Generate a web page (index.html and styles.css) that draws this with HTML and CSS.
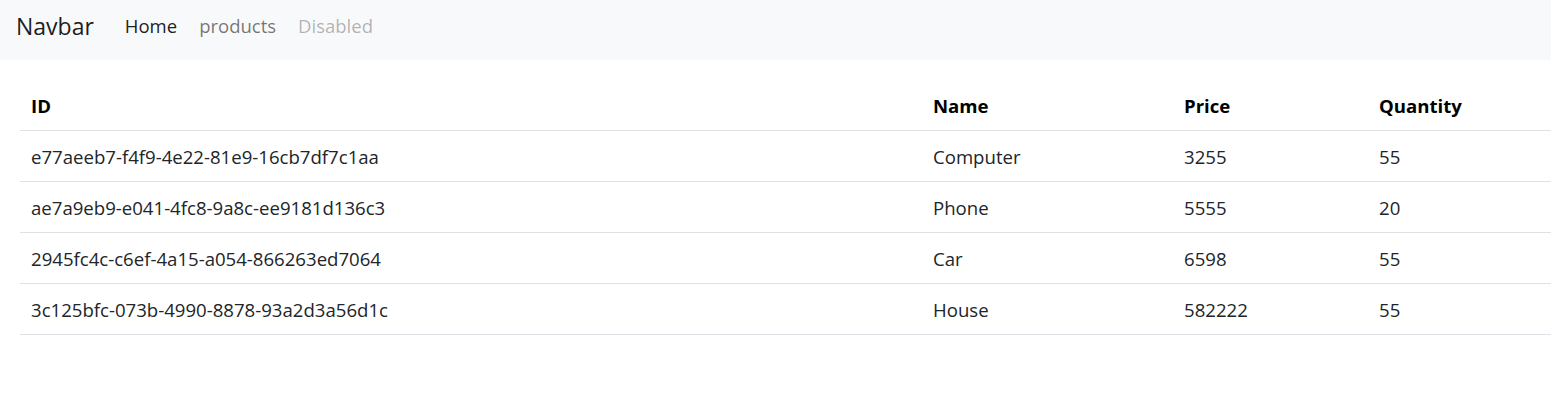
FILE: index.html
```html
<!DOCTYPE html>
<html lang="en">
<head>
<meta charset="utf-8">
<title>Products</title>
<link rel="stylesheet" href="styles.css">
</head>
<body>
<nav class="navbar">
  <a class="brand" href="#">Navbar</a>
  <ul class="nav">
    <li><a class="nav-link active" href="#">Home</a></li>
    <li><a class="nav-link" href="#">products</a></li>
    <li><a class="nav-link disabled" href="#">Disabled</a></li>
  </ul>
</nav>
<main class="content">
  <table class="table">
    <thead>
      <tr><th class="c-id">ID</th><th class="c-name">Name</th><th class="c-price">Price</th><th class="c-qty">Quantity</th></tr>
    </thead>
    <tbody>
      <tr><td>e77aeeb7-f4f9-4e22-81e9-16cb7df7c1aa</td><td>Computer</td><td>3255</td><td>55</td></tr>
      <tr><td>ae7a9eb9-e041-4fc8-9a8c-ee9181d136c3</td><td>Phone</td><td>5555</td><td>20</td></tr>
      <tr><td>2945fc4c-c6ef-4a15-a054-866263ed7064</td><td>Car</td><td>6598</td><td>55</td></tr>
      <tr><td>3c125bfc-073b-4990-8878-93a2d3a56d1c</td><td>House</td><td>582222</td><td>55</td></tr>
    </tbody>
  </table>
</main>
</body>
</html>
```
FILE: styles.css
```css
* { box-sizing: border-box; }
html, body { margin: 0; padding: 0; }
body {
  font-family: "Open Sans", "Noto Sans", sans-serif;
  font-size: 18.6px;
  color: #212529;
  background: #fff;
}
.navbar {
  height: 60px;
  background: #f8f9fa;
  display: flex;
  align-items: center;
  padding: 0 16px 10px;
}
.brand {
  font-size: 23px;
  color: rgba(0,0,0,.9);
  text-decoration: none;
  margin-right: 20px;
  line-height: 1;
  position: relative;
  top: 1px;
}
.nav {
  list-style: none;
  margin: 0;
  padding: 0;
  display: flex;
}
.nav-link {
  display: block;
  padding: 0 11px;
  text-decoration: none;
  color: rgba(0,0,0,.55);
  font-size: 18.5px;
}
.nav-link.active { color: rgba(0,0,0,.9); }
.nav-link.disabled { color: rgba(0,0,0,.3); }
.content {
  padding: 20px 0 0 20px;
}
.table {
  width: 100%;
  border-collapse: collapse;
  table-layout: fixed;
}
.table th, .table td {
  text-align: left;
  padding: 1px 11px 0;
  height: 51px;
  vertical-align: middle;
}
.table th {
  color: #000;
  font-weight: 700;
  height: 50px;
  padding-top: 1px;
  border-bottom: 1px solid #dee2e6;
}
.table td { border-bottom: 1px solid #dee2e6; }
.c-id { width: 902px; }
.c-name { width: 251px; }
.c-price { width: 195px; }
.c-qty { width: auto; }
```
